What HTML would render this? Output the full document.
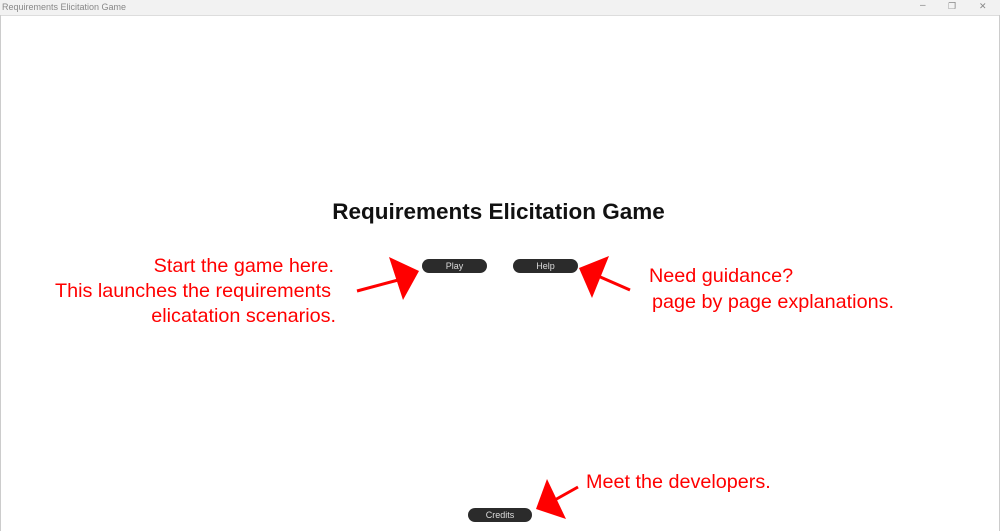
<!DOCTYPE html>
<html><head><style>
body{margin:0;width:1000px;height:531px;background:#fff;position:relative;overflow:hidden;font-family:"Liberation Sans",sans-serif}
.tb{position:absolute;left:0;top:0;width:1000px;height:15px;background:#f2f2f2;border-bottom:1px solid #ddd}
.tb span{position:absolute;left:2px;top:2px;font-size:9px;color:#888}
.frame{position:absolute;left:0;top:15px;width:998px;height:516px;border-left:1px solid #ccc;border-right:1px solid #ccc}
h1{position:absolute;left:0;width:997px;top:199px;margin:0;text-align:center;font-size:22.5px;font-weight:bold;color:#111}
.btn{position:absolute;height:14px;background:#2b2b2b;border-radius:8px;color:#ddd;font-size:9px;text-align:center;line-height:14px}
.r{position:absolute;color:#f00;font-size:19.8px;line-height:25px}
</style></head><body>
<div class="tb"><span>Requirements Elicitation Game</span><span style="left:920px;top:0;font-size:10px">–</span><span style="left:948px;top:1px">❐</span><span style="left:979px;top:1px">✕</span></div>
<div class="frame"></div>
<h1>Requirements Elicitation Game</h1>
<div class="btn" style="left:422px;top:259px;width:65px">Play</div>
<div class="btn" style="left:513px;top:259px;width:65px">Help</div>
<div class="btn" style="left:468px;top:508px;width:64px">Credits</div>
<div class="r" style="right:666px;top:254px;text-align:right">Start the game here.</div>
<div class="r" style="right:669px;top:279px;text-align:right">This launches the requirements</div>
<div class="r" style="right:664px;top:304px;text-align:right">elicatation scenarios.</div>
<div class="r" style="left:649px;top:264px">Need guidance?</div>
<div class="r" style="left:652px;top:290px">page by page explanations.</div>
<div class="r" style="left:586px;top:470px">Meet the developers.</div>
<svg width="1000" height="531" style="position:absolute;left:0;top:0">
<g fill="#f00" stroke="#f00">
<line x1="357" y1="291" x2="402" y2="279" stroke-width="3"/>
<polygon points="389,257 419,271 403,300" stroke="none"/>
<line x1="630" y1="290" x2="598" y2="276" stroke-width="3"/>
<polygon points="579,268 609,256 592,298" stroke="none"/>
<line x1="578" y1="487" x2="553" y2="501" stroke-width="3"/>
<polygon points="547,479 536,509 566,519" stroke="none"/>
</g></svg>
</body></html>
